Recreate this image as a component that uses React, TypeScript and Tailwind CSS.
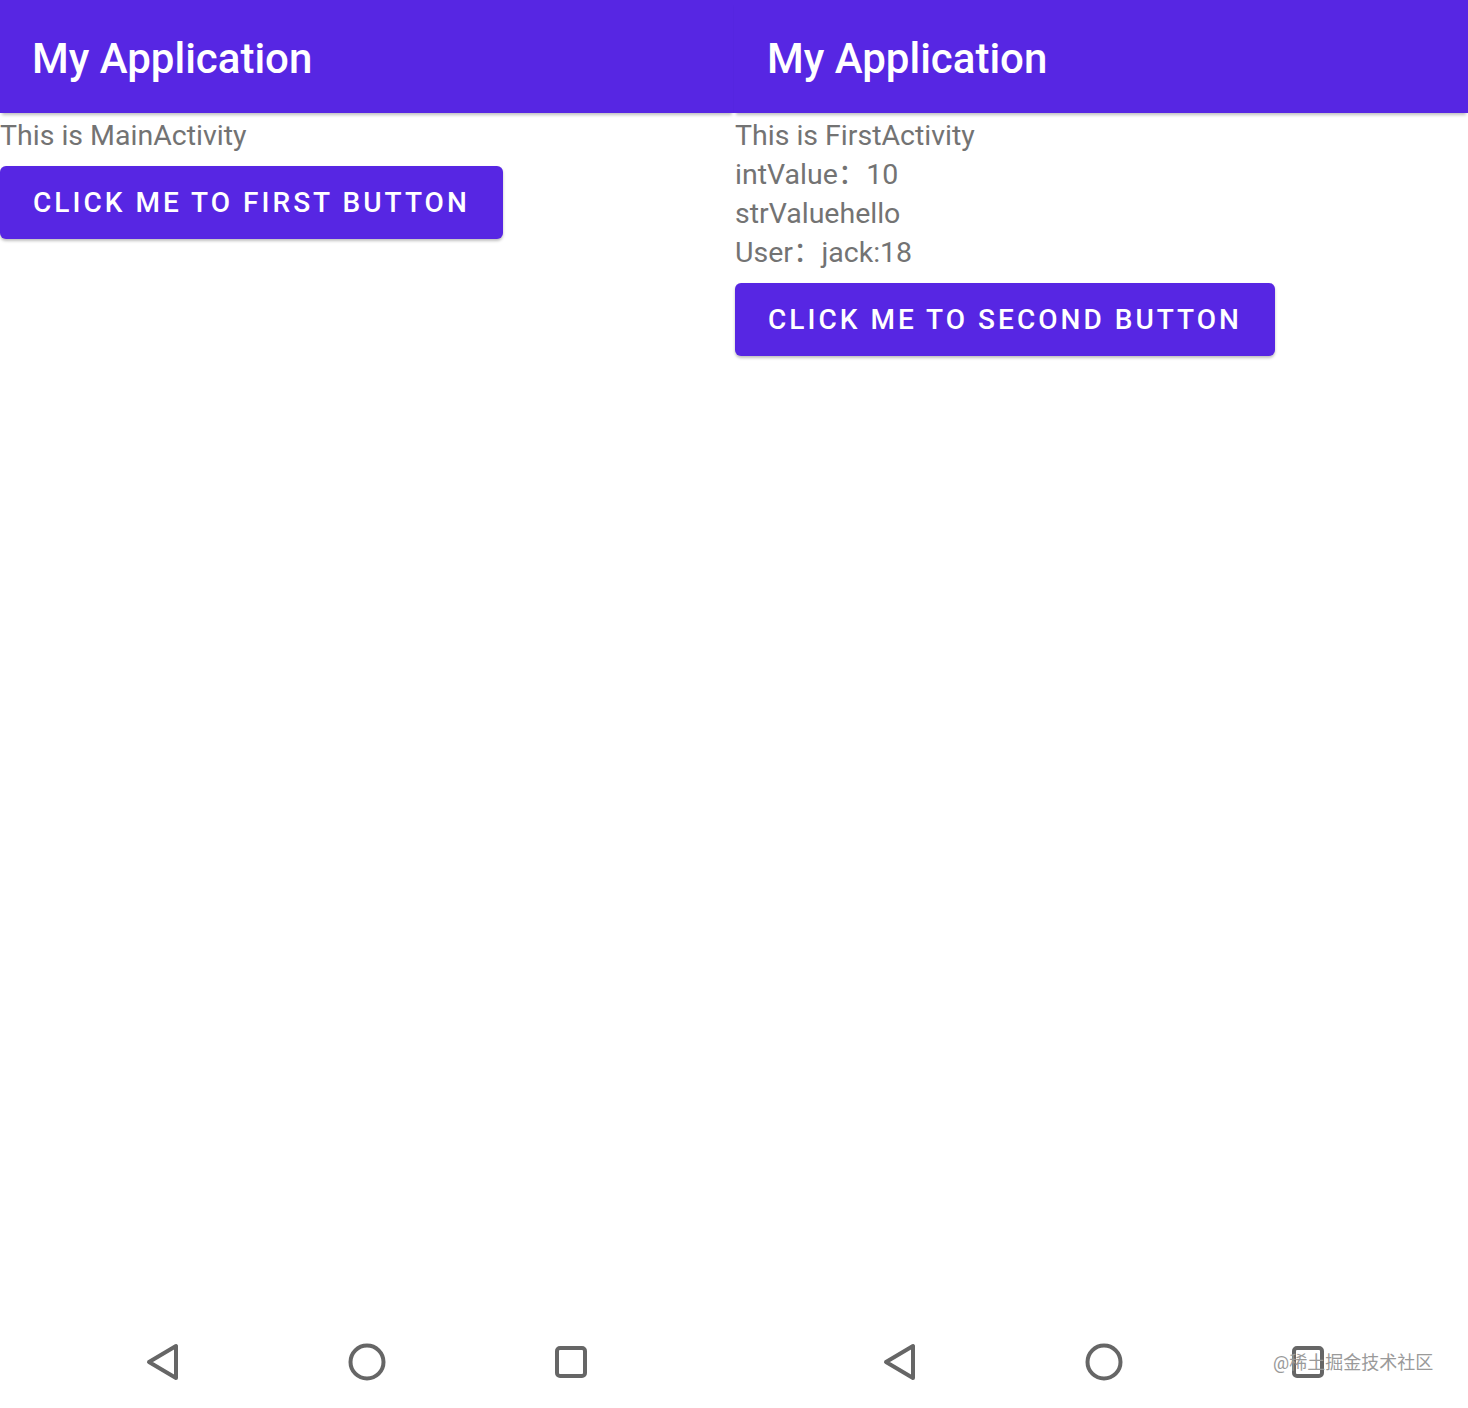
const font = { fontFamily: 'Roboto, "Noto Sans CJK SC", sans-serif' }

function NavBar({ inset }: { inset?: boolean }) {
  return (
    <div className={'mt-auto h-[92px] flex items-center justify-center ' + (inset ? 'pl-[6px]' : '')}>
      <div className="w-[204px] flex justify-center">
        <svg width="40" height="40" viewBox="0 0 40 40" className="text-[#666]">
          <path d="M33 4 L33 36 L6 20 Z" fill="none" stroke="currentColor" strokeWidth="4" strokeLinejoin="round" />
        </svg>
      </div>
      <div className="w-[204px] flex justify-center">
        <svg width="40" height="40" viewBox="0 0 40 40" className="text-[#666]">
          <circle cx="20" cy="20" r="16.5" fill="none" stroke="currentColor" strokeWidth="4" />
        </svg>
      </div>
      <div className="w-[204px] flex justify-center">
        <svg width="40" height="40" viewBox="0 0 40 40" className="text-[#666]">
          <rect x="6" y="6" width="28" height="28" rx="3" fill="none" stroke="currentColor" strokeWidth="4" />
        </svg>
      </div>
    </div>
  )
}

function Screen({ lines, button, inset }: { lines: string[]; button: string; inset?: boolean }) {
  return (
    <div className="w-[734px] h-[1408px] flex flex-col bg-white">
      <div className={'h-[113px] bg-[#5726e3] flex items-center shadow-[0_4px_3px_-2px_rgba(0,0,0,0.25)] relative z-10 ' + (inset ? 'pl-[33px]' : 'pl-8')}>
        <span className="text-white text-[42px] font-medium mt-1">My Application</span>
      </div>
      <div className={'pt-[3px] ' + (inset ? 'pl-px' : '')}>
        {lines.map((l) => (
          <div key={l} className="text-[28.5px] leading-[39px] text-[#737373]">{l}</div>
        ))}
        <button className="mt-[11px] h-[73px] px-[33px] bg-[#5726e3] rounded-[6px] text-white text-[28px] font-medium tracking-[0.108em] shadow-[0_2px_3px_rgba(0,0,0,0.25)]">
          {button}
        </button>
      </div>
      <NavBar inset={inset} />
    </div>
  )
}

export default function App() {
  return (
    <div className="w-[1468px] h-[1408px] flex relative" style={font}>
      <Screen lines={['This is MainActivity']} button="CLICK ME TO FIRST BUTTON" />
      <Screen
        inset
        lines={['This is FirstActivity', 'intValue：10', 'strValuehello', 'User：jack:18']}
        button="CLICK ME TO SECOND BUTTON"
      />
      <div className="absolute left-[1273px] top-[1351px] text-[18px] leading-[24px] text-[#9a9a9a]">@稀土掘金技术社区</div>
    </div>
  )
}
